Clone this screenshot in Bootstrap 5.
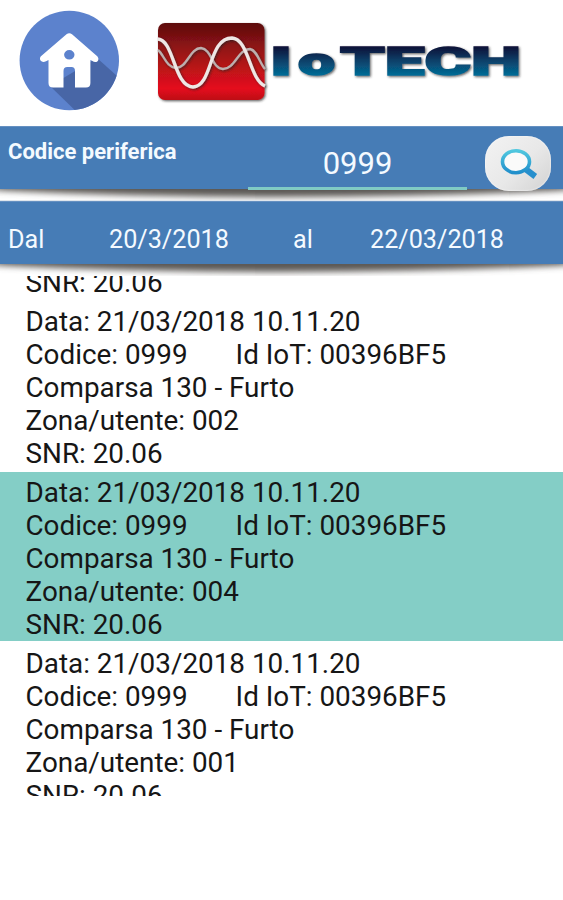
<!DOCTYPE html>
<html lang="it">
<head>
<meta charset="utf-8">
<meta name="viewport" content="width=device-width, initial-scale=1">
<title>IoTECH</title>
<link href="https://cdn.jsdelivr.net/npm/bootstrap@5.3.0/dist/css/bootstrap.min.css" rel="stylesheet">
<style>
body{font-family:Roboto,"Noto Sans",sans-serif;color:#161616;background:#fff;height:900px;overflow:hidden}
.app-head{height:126px;padding:10px 0 0 19px}
.brand-logo{margin-left:33px}
.bar{background:#467cb6;color:#f4faff;font-size:25.2px;line-height:29px}
.bar-code{height:63px;padding-left:8px;padding-right:12px;box-shadow:inset 0 1px #6590c1}
.bar-dates{height:63px;padding:24px 0 0 8px;box-shadow:inset 0 1px #6590c1}
.code-label{width:241px;font-size:22px;font-weight:700;line-height:26px;padding-top:13px}
.code-field{width:219px;height:64px;font-size:31px;line-height:36px;padding-top:20px;border-bottom:3px solid #80cbc4;position:relative;z-index:2}
.search-btn{width:66px;height:55px;margin:10px 0 0 18px;border-radius:24px;background:linear-gradient(135deg,#f3f3f3,#e8e8e8 55%,#d2d2d2);box-shadow:inset 0 0 2px #fff;position:relative;z-index:2}
.shade{height:12px;line-height:0}
.col-from{width:101px}.col-start{width:184px}.col-to{width:77px}
.log{height:520px;overflow:hidden;font-size:27.85px;line-height:32.9px}
.entry{height:171px;padding:5px 0 0 25.5px;white-space:nowrap}
.entry-tail{height:25px;padding:0 0 0 25.5px;margin-bottom:0}
.entry-tail div{margin-top:-9.5px}
.entry.sel{background:linear-gradient(#84cec6 169px,#fff 169px)}
.id-part{margin-left:48px}
</style>
<script src="https://cdn.jsdelivr.net/npm/bootstrap@5.3.0/dist/js/bootstrap.bundle.min.js"></script>
</head>
<body>
<svg width="0" height="0" class="d-block" aria-hidden="true"><defs>
<filter id="soft" x="-5%" y="-60%" width="110%" height="220%"><feGaussianBlur stdDeviation="9 3.2"/></filter>
</defs></svg>
<header class="app-head d-flex align-items-start">
<svg width="101" height="101" viewBox="19 10 101 101" role="img" aria-label="Home">
<defs><clipPath id="disc"><circle cx="69.3" cy="60.5" r="49.7"/></clipPath></defs>
<circle cx="69.3" cy="60.5" r="49.7" fill="#5c82cd"/>
<path clip-path="url(#disc)" d="M97 58L125 83V120H85L50 86Z" fill="#4866a6"/>
<path fill="#fff" fill-rule="evenodd" d="M66.5 34.2Q69.3 32.3 72 34.2L97.5 56.5Q99.5 59.5 97.3 61.5Q95 63 92 60.8L90.4 60V83Q90.4 87.5 86 87.5H75V71Q75 67 71.500 67H67.3Q63.5 67 63.5 71V87.5H53Q48.5 87.5 48.5 83V60L46 61.3Q42.5 63 40.5 60.5Q39 58 41.5 55.8ZM69.3 50A5.2 4.8 0 1 0 69.3 59.6A5.2 4.8 0 1 0 69.3 50Z"/>
</svg>
<svg class="brand-logo" width="375" height="101" viewBox="153 10 375 101">
<defs>
<linearGradient id="red" x1="0" y1="0" x2="0" y2="1"><stop offset="0" stop-color="#5d0e0d"/><stop offset=".45" stop-color="#a41518"/><stop offset=".85" stop-color="#e50f1b"/><stop offset="1" stop-color="#bd0d18"/></linearGradient>
<linearGradient id="blue" gradientUnits="userSpaceOnUse" x1="0" y1="47" x2="0" y2="76"><stop offset="0" stop-color="#0a1238"/><stop offset=".45" stop-color="#093e67"/><stop offset="1" stop-color="#046e98"/></linearGradient>
<filter id="drop" x="-5%" y="-10%" width="115%" height="130%"><feDropShadow dx="1.2" dy="1.2" stdDeviation=".8" flood-color="#222" flood-opacity=".7"/></filter>
</defs>
<rect x="158" y="23" width="106.500" height="77" rx="7" fill="url(#red)" filter="url(#drop)"/>
<g fill="none" filter="url(#drop)">
<path d="M158 50C164 55 166 67 176 68C187 68 190 48 201 48C212 49 212 69 223 69C235 69 238 49 250 49C257 50 260 64 265 69" stroke="#bcafae" stroke-width="2.300"/>
<path d="M158 39C174 40 174 87 193 87C213 86 208 38 232 38C249 39 249 79 265 86" stroke="#eee7e5" stroke-width="3.300"/>
</g>
<text font-family="Roboto" font-weight="900" font-size="38" fill="url(#blue)" stroke="url(#blue)" stroke-width="1.500" filter="url(#drop)" y="75"><tspan x="270" textLength="22" lengthAdjust="spacingAndGlyphs">I</tspan><tspan x="298" textLength="37" lengthAdjust="spacingAndGlyphs">o</tspan><tspan x="340" textLength="181" lengthAdjust="spacingAndGlyphs">TECH</tspan></text>
</svg>
</header>

<section class="bar bar-code d-flex align-items-start">
<div class="code-label">Codice periferica</div>
<div class="code-field text-center flex-shrink-0">0999</div>
<button class="search-btn btn border-0 p-0 flex-shrink-0" aria-label="Cerca">
<svg class="d-block" width="66" height="55" viewBox="485 136 66 55">
<defs><linearGradient id="lens" x1="0" y1="0" x2="0" y2="1"><stop offset="0" stop-color="#50c7df"/><stop offset="1" stop-color="#218fcb"/></linearGradient></defs>
<path d="M525.500 169L535.300 176.500" stroke="#278fcd" stroke-width="6"/>
<ellipse cx="516" cy="161.700" rx="13.500" ry="11" fill="#fafafa" stroke="url(#lens)" stroke-width="3.600"/>
</svg></button>
</section>
<div class="shade"><svg width="563" height="12" viewBox="0 0 563 12"><path d="M-10 -12H573V1Q281 15 -10 1Z" fill="#5c5855" filter="url(#soft)"/><path d="M0 11.500H563" stroke="#dfe5ec" stroke-width="1"/></svg></div>
<section class="bar bar-dates d-flex">
<div class="col-from">Dal</div><div class="col-start">20/3/2018</div><div class="col-to">al</div><div>22/03/2018</div>
</section>
<div class="shade"><svg width="563" height="12" viewBox="0 0 563 12"><path d="M-10 -12H573V1Q281 15 -10 1Z" fill="#5c5855" filter="url(#soft)"/></svg></div>

<main class="log">
<div class="entry-tail d-flex"><div>SNR: 20.06</div></div>
<div class="entry">Data: 21/03/2018 10.11.20<br>Codice: 0999<span class="id-part">Id IoT: 00396BF5</span><br>Comparsa 130 - Furto<br>Zona/utente: 002<br>SNR: 20.06</div>
<div class="entry sel">Data: 21/03/2018 10.11.20<br>Codice: 0999<span class="id-part">Id IoT: 00396BF5</span><br>Comparsa 130 - Furto<br>Zona/utente: 004<br>SNR: 20.06</div>
<div class="entry">Data: 21/03/2018 10.11.20<br>Codice: 0999<span class="id-part">Id IoT: 00396BF5</span><br>Comparsa 130 - Furto<br>Zona/utente: 001<br>SNR: 20.06</div>
</main>
</body>
</html>
